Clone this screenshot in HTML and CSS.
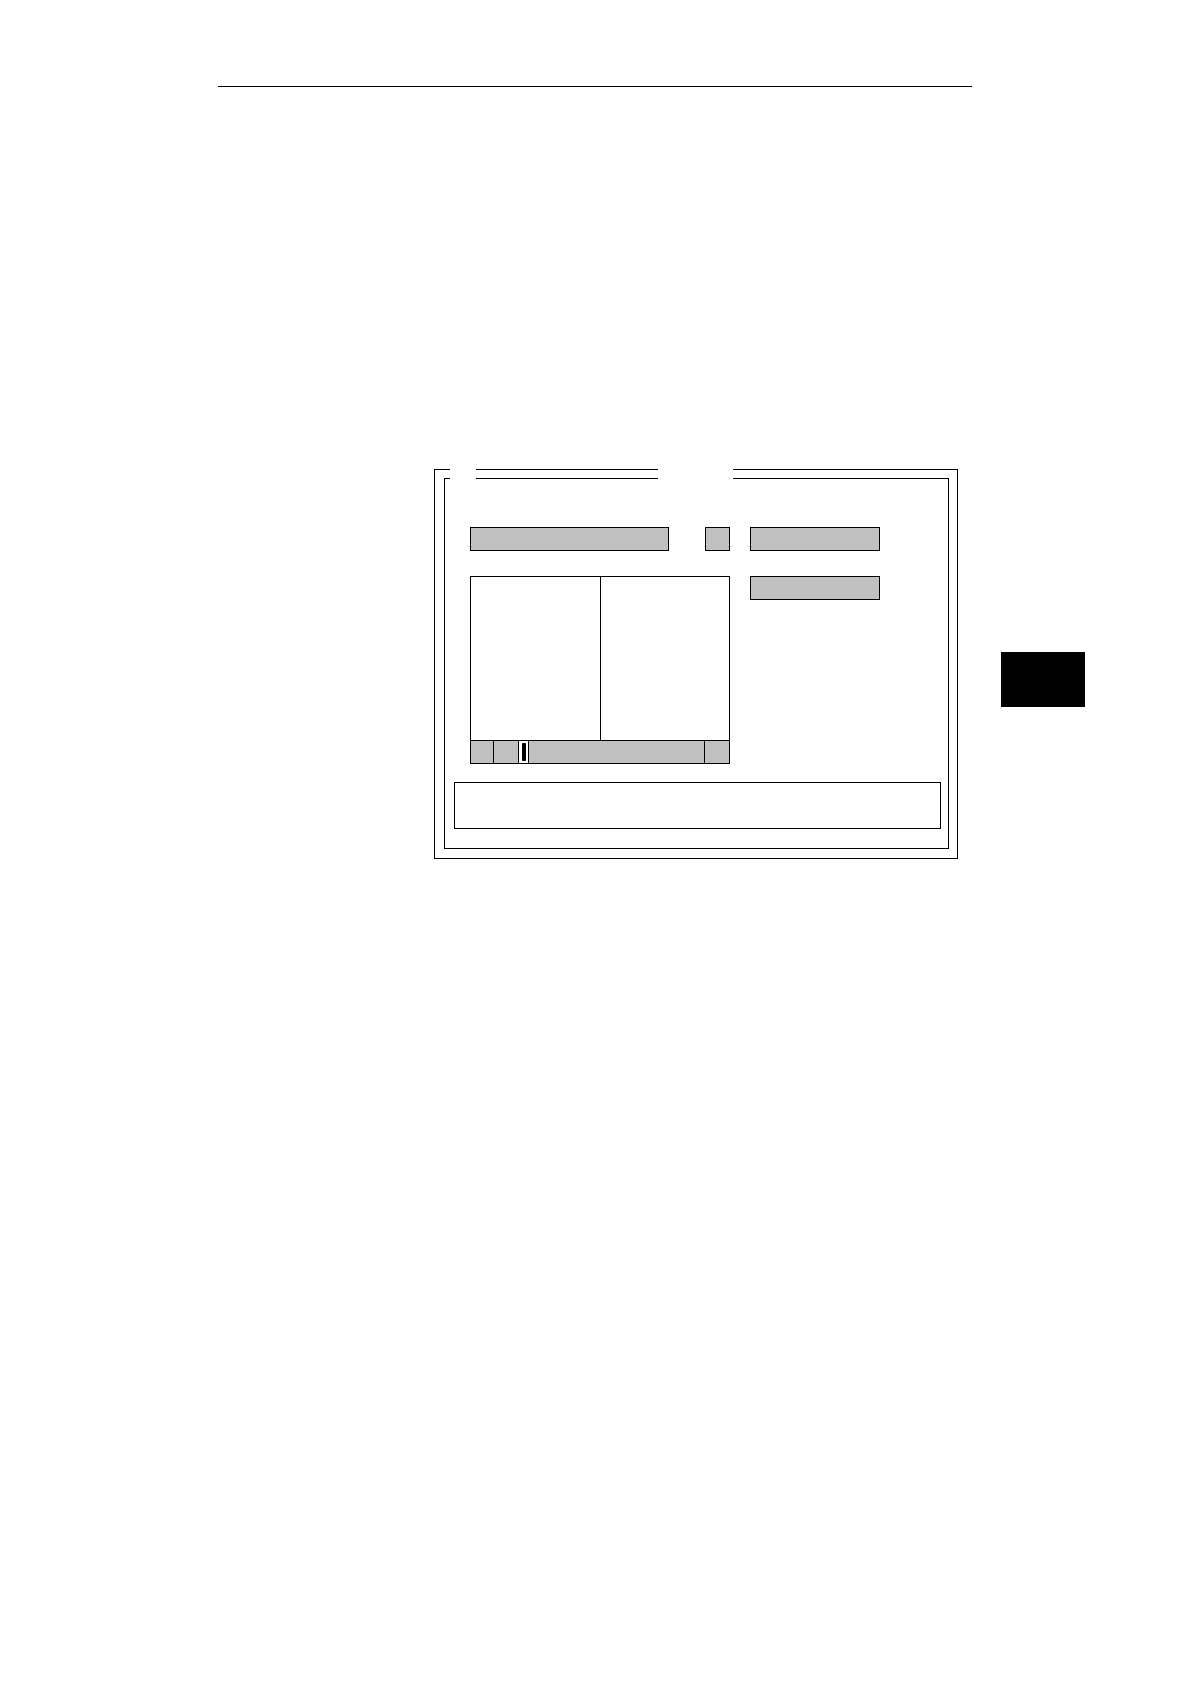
FILE: index.html
```html
<!DOCTYPE html>
<html>
<head>
<meta charset="utf-8">
<title>Dialog</title>
<link rel="stylesheet" href="styles.css">
</head>
<body>
<div class="page">
  <div class="rule"></div>
  <div class="main">
    <div class="dialog">
      <span class="title-gap gap-a"></span>
      <span class="title-gap gap-b"></span>
      <div class="frame">
        <div class="controls">
          <div class="left-col">
            <div class="row-top">
              <div class="field field-wide"></div>
              <div class="field field-square"></div>
            </div>
            <div class="listbox">
              <div class="panes">
                <div class="pane pane-left"></div>
                <div class="pane pane-right"></div>
              </div>
              <div class="scrollbar">
                <div class="sb-cell sb-btn1"></div>
                <div class="sb-cell sb-btn2"></div>
                <div class="sb-cell sb-thumb"><span class="thumb-bar"></span></div>
                <div class="sb-cell sb-track"></div>
                <div class="sb-cell sb-btn3"></div>
              </div>
            </div>
          </div>
          <div class="right-col">
            <div class="field field-btn"></div>
            <div class="field field-btn field-btn2"></div>
          </div>
        </div>
        <div class="message"></div>
      </div>
    </div>
    <div class="side-tab"></div>
  </div>
</div>
</body>
</html>
```

FILE: styles.css
```css
* {
  box-sizing: border-box;
}

html, body {
  margin: 0;
  padding: 0;
  background: #ffffff;
  font-family: "Liberation Sans", Arial, sans-serif;
}

.page {
  width: 1190px;
  height: 1684px;
  padding-top: 86px;
}

.rule {
  margin-left: 218px;
  width: 754px;
  height: 0;
  border-top: 1px solid #000;
}

.main {
  display: flex;
  align-items: flex-start;
  margin-top: 382px;
  padding-left: 434px;
}

.dialog {
  position: relative;
  width: 524px;
  height: 390px;
  border: 1px solid #000;
  padding: 8px 8px 9px 9px;
}

.title-gap {
  position: absolute;
  top: -1px;
  height: 11px;
  background: #ffffff;
}

.gap-a {
  left: 15px;
  width: 26px;
}

.gap-b {
  left: 223px;
  width: 75px;
}

.frame {
  width: 505px;
  height: 371px;
  border: 1px solid #000;
  padding: 48px 0 0 9px;
}

.controls {
  display: flex;
  align-items: flex-start;
  margin-left: 16px;
  gap: 20px;
}

.left-col {
  width: 260px;
  display: flex;
  flex-direction: column;
  gap: 25px;
}

.row-top {
  display: flex;
  justify-content: space-between;
}

.field {
  height: 24px;
  background: #c0c0c0;
  border: 1px solid #000;
}

.field-wide {
  width: 199px;
}

.field-square {
  width: 25px;
}

.right-col {
  display: flex;
  flex-direction: column;
  gap: 25px;
}

.field-btn {
  width: 130px;
}

.listbox {
  width: 260px;
  height: 188px;
  border: 1px solid #000;
  display: flex;
  flex-direction: column;
}

.panes {
  display: flex;
  height: 163px;
}

.pane-left {
  width: 130px;
  border-right: 1px solid #000;
}

.pane-right {
  flex: 1;
}

.scrollbar {
  display: flex;
  height: 23px;
  border-top: 1px solid #000;
  background: #c0c0c0;
}

.sb-cell {
  height: 100%;
  border-right: 1px solid #000;
}

.sb-btn1 {
  width: 23px;
}

.sb-btn2 {
  width: 25px;
}

.sb-thumb {
  width: 10px;
  background: #ffffff;
  display: flex;
  align-items: center;
  justify-content: center;
}

.thumb-bar {
  display: block;
  width: 4px;
  height: 18px;
  background: #000;
  border-radius: 1px;
}

.sb-track {
  width: 176px;
}

.sb-btn3 {
  width: 24px;
  border-right: none;
}

.message {
  margin-top: 18px;
  width: 487px;
  height: 47px;
  border: 1px solid #000;
}

.side-tab {
  margin-left: 43px;
  margin-top: 183px;
  width: 84px;
  height: 55px;
  background: #000;
}
```
